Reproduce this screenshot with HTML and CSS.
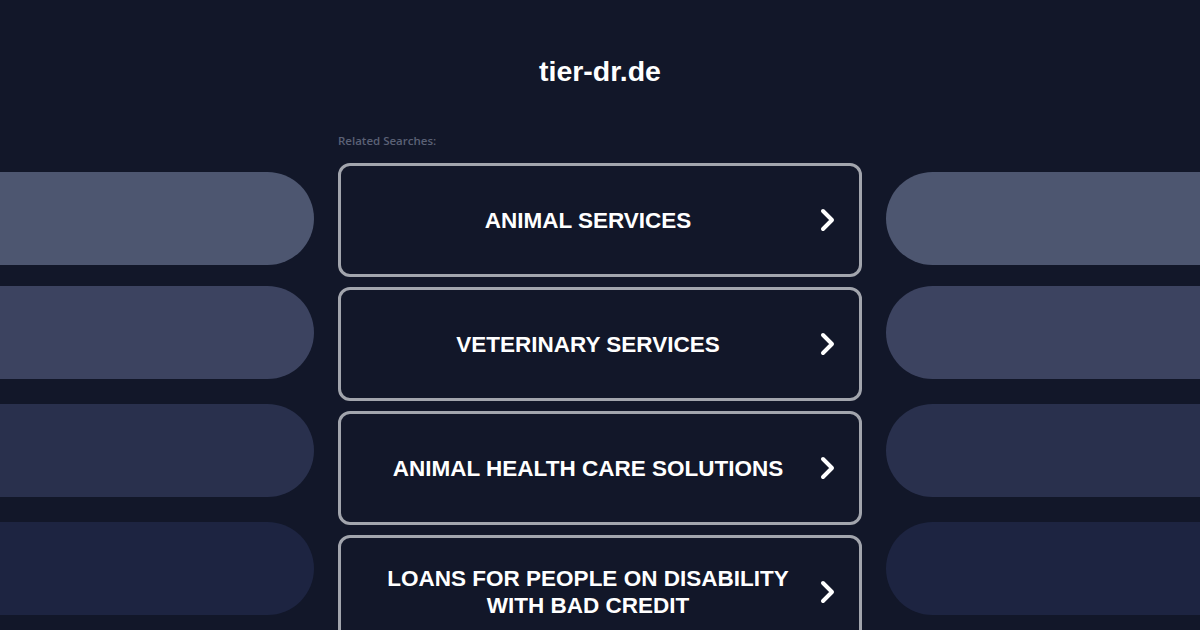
FILE: index.html
```html
<!DOCTYPE html>
<html lang="en">
<head>
<meta charset="utf-8">
<title>tier-dr.de</title>
<link rel="stylesheet" href="styles.css">
</head>
<body>
<div class="page">
  <header class="header"><h1 class="title">tier-dr.de</h1></header>
  <aside class="side side-left">
    <div class="pill p1"></div>
    <div class="pill p2"></div>
    <div class="pill p3"></div>
    <div class="pill p4"></div>
  </aside>
  <main class="center">
    <div class="label">Related Searches:</div>
    <ul class="links">
      <li><a class="card" href="#"><span class="card-text">ANIMAL SERVICES</span><span class="arrow"><svg viewBox="0 0 15 24" width="15" height="24"><path d="M3 3 L12 12 L3 21" /></svg></span></a></li>
      <li><a class="card" href="#"><span class="card-text">VETERINARY SERVICES</span><span class="arrow"><svg viewBox="0 0 15 24" width="15" height="24"><path d="M3 3 L12 12 L3 21" /></svg></span></a></li>
      <li><a class="card" href="#"><span class="card-text">ANIMAL HEALTH CARE SOLUTIONS</span><span class="arrow"><svg viewBox="0 0 15 24" width="15" height="24"><path d="M3 3 L12 12 L3 21" /></svg></span></a></li>
      <li><a class="card" href="#"><span class="card-text">LOANS FOR PEOPLE ON DISABILITY WITH BAD CREDIT</span><span class="arrow"><svg viewBox="0 0 15 24" width="15" height="24"><path d="M3 3 L12 12 L3 21" /></svg></span></a></li>
    </ul>
  </main>
  <aside class="side side-right">
    <div class="pill p1"></div>
    <div class="pill p2"></div>
    <div class="pill p3"></div>
    <div class="pill p4"></div>
  </aside>
</div>
</body>
</html>
```

FILE: styles.css
```css
* { box-sizing: border-box; }
html, body {
  margin: 0;
  padding: 0;
  background: #121729;
  height: 630px;
  overflow: hidden;
}
body {
  font-family: "Liberation Sans", Arial, sans-serif;
  color: #ffffff;
}
.page {
  display: grid;
  grid-template-columns: 314px 524px 314px;
  column-gap: 24px;
  grid-template-rows: auto 1fr;
}
.header {
  grid-column: 1 / 4;
  text-align: center;
  padding-top: 54px;
  height: 134px;
}
.title {
  margin: 0;
  font-size: 28.5px;
  line-height: 34px;
  font-weight: bold;
  color: #ffffff;
}
.side {
  display: flex;
  flex-direction: column;
  padding-top: 38px;
}
.pill {
  height: 93px;
}
.side-left .pill { border-radius: 0 47px 47px 0; }
.side-right .pill { border-radius: 47px 0 0 47px; }
.pill + .pill { margin-top: 21px; }
.p3, .p4 { margin-top: 25px !important; }
.p1 { background: #4d5670; }
.p2 { background: #3c4360; }
.p3 { background: #29304d; }
.p4 { background: #1d2441; }

.center { display: flex; flex-direction: column; }
.label {
  font-family: "Open Sans", "Liberation Sans", sans-serif;
  font-size: 11.5px;
  font-weight: 600;
  line-height: 14px;
  color: #5b6176;
  margin-bottom: 15px;
}
.links {
  list-style: none;
  margin: 0;
  padding: 0;
  display: flex;
  flex-direction: column;
  gap: 10px;
}
.card {
  display: flex;
  align-items: center;
  height: 114px;
  border: 3px solid #a2a5ad;
  border-radius: 12px;
  padding: 0 24px 0 27px;
  text-decoration: none;
  color: #ffffff;
}
.card-text {
  flex: 1;
  text-align: center;
  font-size: 22.5px;
  font-weight: bold;
  line-height: 27px;
  padding: 0 10px;
}
.arrow {
  width: 27px;
  display: flex;
  justify-content: flex-end;
  align-items: center;
}
.arrow svg path {
  fill: none;
  stroke: #ffffff;
  stroke-width: 4;
  stroke-linecap: round;
  stroke-linejoin: round;
}
```
